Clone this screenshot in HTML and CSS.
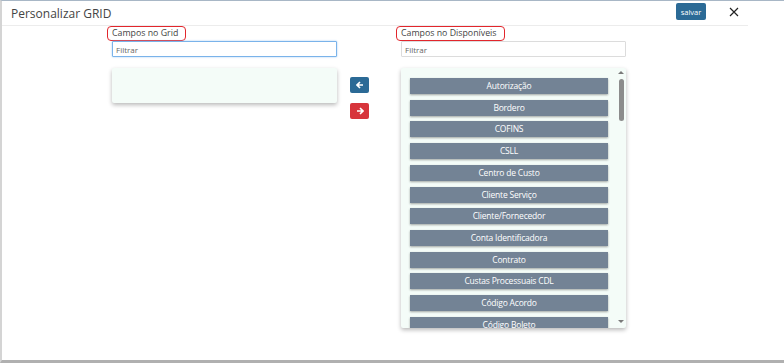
FILE: index.html
```html
<!DOCTYPE html>
<html>
<head lang="pt">
    <meta charset="UTF-8">
    <title>Personalizar GRID</title>
    <link rel="stylesheet" href="styles.css">
</head>
<body>
<div class="modal">
    <div class="header">
        <h4>Personalizar GRID</h4>
        <button class="save">salvar</button>
        <span class="close">
            <svg width="10" height="10" viewBox="0 0 10 10"><path d="M1 1L9 9M9 1L1 9" stroke="#222" stroke-width="1.2"/></svg>
        </span>
    </div>
    <div class="body">
        <div class="col">
            <label class="mark">Campos no Grid</label>
            <input class="filter focus" type="text" placeholder="Filtrar">
            <div class="list empty"></div>
        </div>
        <div class="moves">
            <span class="btn blue">
                <svg width="8" height="8" viewBox="0 0 8 8"><path d="M7 4H1.5M4 1L1 4L4 7" stroke="#fff" stroke-width="1.6" fill="none"/></svg>
            </span>
            <span class="btn red">
                <svg width="8" height="8" viewBox="0 0 8 8"><path d="M1 4H6.5M4 1L7 4L4 7" stroke="#fff" stroke-width="1.6" fill="none"/></svg>
            </span>
        </div>
        <div class="col">
            <label class="mark">Campos no Disponíveis</label>
            <input class="filter" type="text" placeholder="Filtrar">
            <div class="list full">
                <ul>
                    <li>Autorização</li>
                    <li>Bordero</li>
                    <li>COFINS</li>
                    <li>CSLL</li>
                    <li>Centro de Custo</li>
                    <li>Cliente Serviço</li>
                    <li>Cliente/Fornecedor</li>
                    <li>Conta Identificadora</li>
                    <li>Contrato</li>
                    <li>Custas Processuais CDL</li>
                    <li>Código Acordo</li>
                    <li>Código Boleto</li>
                </ul>
                <div class="scroll">
                    <span class="up"></span>
                    <span class="thumb"></span>
                    <span class="down"></span>
                </div>
            </div>
        </div>
    </div>
</div>
</body>
</html>
```

FILE: styles.css
```css
* {
    padding: 0;
    margin: 0;
    box-sizing: border-box;
}
body, html {
    height: 100%;
    overflow: hidden;
    background: #fff;
    font-family: "Open Sans", "Noto Sans", sans-serif;
}
.modal {
    height: 363px;
    border-top: 1px solid #a8b7c6;
    border-left: 2px solid #d4d4d4;
    border-bottom: 3px solid #b0b0b0;
}
.header {
    display: flex;
    align-items: center;
    height: 25px;
    margin-right: 36px;
    border-bottom: 1px solid #ececec;
    padding-left: 9px;
}
.header h4 {
    flex: 1;
    font-weight: normal;
    font-size: 12px;
    color: #444;
}
.save {
    width: 30px;
    height: 17px;
    border: none;
    border-radius: 2px;
    background: #2b6a96;
    color: #fff;
    font-family: inherit;
    font-size: 7.5px;
    margin-top: -3px;
}
.close {
    display: flex;
    margin-left: 23px;
    margin-right: 9px;
    margin-top: -3px;
}
.body {
    display: flex;
    padding-left: 110px;
}
.col {
    width: 225px;
    display: flex;
    flex-direction: column;
    align-items: flex-start;
}
.mark {
    display: inline-block;
    height: 15px;
    margin-left: -5px;
    padding: 0 7px 0 4px;
    border: 1.5px solid #e2262c;
    border-radius: 4px;
    font-size: 8.8px;
    line-height: 12px;
    color: #444;
}
.filter {
    width: 225px;
    height: 16px;
    border: 1px solid #dcdcdc;
    border-radius: 1px;
    padding-left: 3px;
    font-family: inherit;
    font-size: 8px;
    outline: none;
}
.filter::placeholder {
    color: #666;
}
.filter.focus {
    border-color: #7ab3ea;
    box-shadow: 0 0 2px #9cc7f0;
}
.list {
    width: 225px;
    margin-top: 11px;
    background: #f4fcf8;
    border-radius: 2px;
    box-shadow: 0 2px 4px rgba(0,0,0,0.28);
}
.list.empty {
    height: 35px;
}
.list.full {
    height: 260px;
    display: flex;
    overflow: hidden;
}
.moves {
    width: 64px;
    padding: 51px 0 0 13px;
    display: flex;
    flex-direction: column;
    gap: 10px;
}
.btn {
    width: 19px;
    height: 16px;
    border-radius: 2px;
    display: flex;
    align-items: center;
    justify-content: center;
}
.blue {
    background: #2b6a96;
}
.red {
    background: #d7343b;
}
.list ul {
    list-style: none;
    padding: 10px 0 0 9px;
    width: 216px;
    display: flex;
    flex-direction: column;
    gap: 5.73px;
}
.list li {
    height: 16px;
    width: 198px;
    flex-shrink: 0;
    background: #738395;
    color: #fff;
    font-size: 8.5px;
    line-height: 16px;
    text-align: center;
    box-shadow: 0 1px 2px rgba(0,0,0,0.35);
    letter-spacing: -0.2px;
}
.scroll {
    width: 8px;
    margin-top: 3px;
    height: 256px;
    display: flex;
    flex-direction: column;
    align-items: center;
}
.up, .down {
    width: 0;
    height: 0;
    border-left: 3px solid transparent;
    border-right: 3px solid transparent;
}
.up {
    border-bottom: 3px solid #7a7a7a;
}
.thumb {
    width: 5px;
    height: 42px;
    margin-top: 5px;
    border-radius: 3px;
    background: #8c8c8c;
    flex: none;
}
.down {
    margin-top: auto;
    margin-bottom: 4px;
    border-top: 3px solid #7a7a7a;
}
```
